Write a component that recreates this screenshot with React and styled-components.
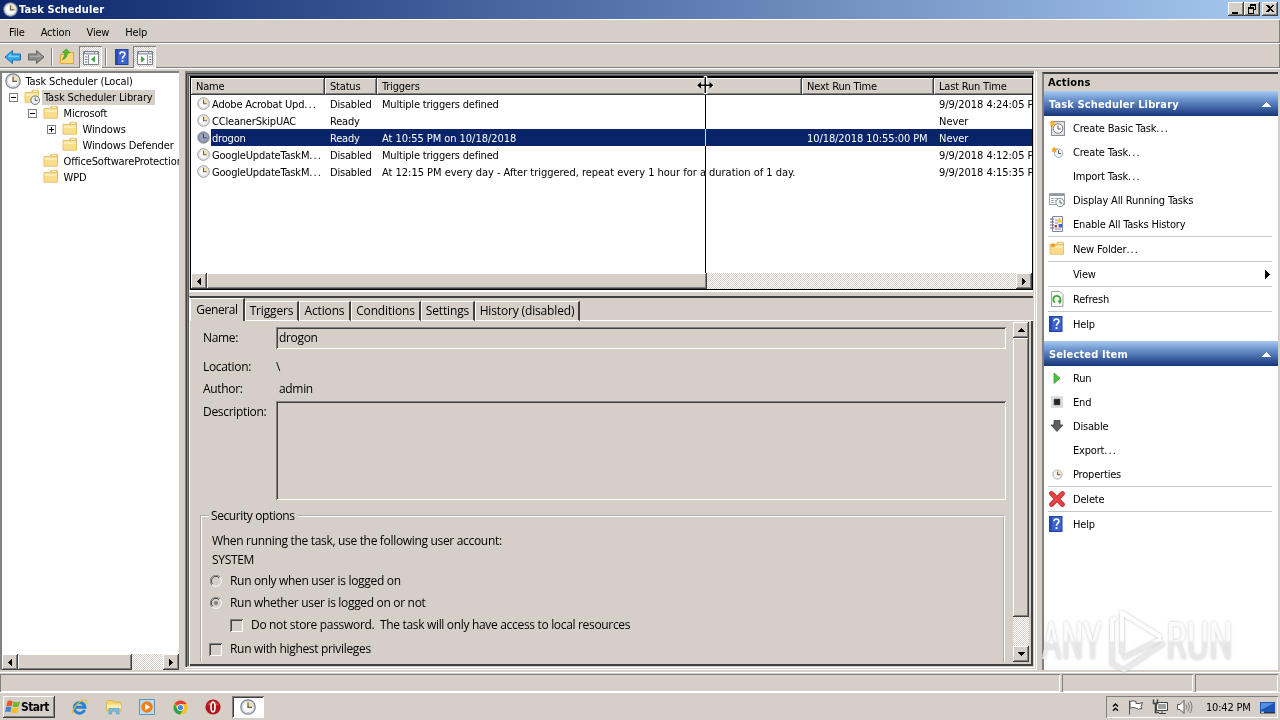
import React from 'react';
import styled, { createGlobalStyle, css } from 'styled-components';

const colors = {
    face: '#d5cfc8',
    shadow: '#808080',
    dark: '#404040',
    navy: '#0a246a',
    sky: '#a6caf0',
};

const GlobalStyle = createGlobalStyle`
    * {
        box-sizing: border-box;
    }

    body {
        margin: 0;
        overflow: hidden;
        background: ${colors.face};
    }

    svg {
        display: block;
        flex: none;
    }
`;

const raised = css`
    background: ${colors.face};
    box-shadow: inset -1px -1px ${colors.dark}, inset 1px 1px #fff, inset -2px -2px ${colors.shadow};
`;

const sunken = css`
    box-shadow: inset 1px 1px ${colors.shadow}, inset -1px -1px #fff, inset 2px 2px ${colors.dark};
`;

const dither = css`
    background: repeating-conic-gradient(#fff 0 25%, ${colors.face} 0 50%) 0 0 / 2px 2px;
`;

const Desktop = styled.div`
    width: 1280px;
    height: 720px;
    display: flex;
    flex-direction: column;
    overflow: hidden;
    position: relative;
    color: #000;
    background: ${colors.face};
    font-family: 'DejaVu Sans Condensed', 'DejaVu Sans', sans-serif;
    font-stretch: condensed;
    font-size: 11px;
    letter-spacing: -0.19px;
    white-space: nowrap;
`;

const TitleBar = styled.div`
    height: 19px;
    flex: none;
    display: flex;
    align-items: center;
    padding: 0 2px 1px 3px;
    background: linear-gradient(90deg, ${colors.navy}, ${colors.sky});
`;

const TitleText = styled.span`
    flex: 1;
    margin-left: 1px;
    color: #fff;
    font-weight: bold;
    letter-spacing: 0.1px;
`;

const CaptionButton = styled.div`
    width: 16px;
    height: 14px;
    margin-left: ${(p) => (p.$gap ? 2 : 0)}px;
    ${raised}
`;

const MenuBar = styled.div`
    height: 25px;
    flex: none;
    display: flex;
    align-items: center;
    gap: 16px;
    padding: 2px 0 0 9px;
    border-top: 1px solid #fff;
    border-bottom: 1px solid #fff;
    box-shadow: inset 0 -1px ${colors.shadow}, inset -1px 0 ${colors.shadow};
`;

const ToolBar = styled.div`
    height: 25px;
    flex: none;
    display: flex;
    align-items: center;
    padding: 1px 0 0 4px;
    border-bottom: 1px solid #fff;
    box-shadow: inset 0 -1px ${colors.shadow}, inset -1px 0 ${colors.shadow};
`;

const ToolButton = styled.div`
    width: ${(p) => p.$w || 23}px;
    height: 22px;
    display: flex;
    align-items: center;
    justify-content: center;
    ${(p) =>
        p.$pressed &&
        css`
            padding-top: 2px;
            ${dither}
            box-shadow: inset 1px 1px ${colors.shadow}, inset -1px -1px #fff;
        `}
`;

const ToolDivider = styled.div`
    width: 2px;
    height: 18px;
    margin: 0 ${(p) => p.$m || 3}px;
    background: linear-gradient(90deg, ${colors.shadow} 50%, #fff 50%);
`;

const Workspace = styled.div`
    height: 603px;
    flex: none;
    display: flex;
    padding: 2px 1px 0 0;
`;

const TreePane = styled.div`
    width: 179px;
    height: 599px;
    flex: none;
    display: flex;
    flex-direction: column;
    background: #fff;
    border: solid ${colors.shadow};
    border-width: 2px 0 0 2px;
    overflow: hidden;
`;

const TreeList = styled.div`
    flex: 1;
    overflow: hidden;
    padding-left: 3px;
    letter-spacing: -0.14px;
`;

const TreeRow = styled.div`
    height: 16px;
    display: flex;
    align-items: center;
    padding-left: ${(p) => p.$indent}px;
`;

const Expander = styled.div`
    width: 9px;
    height: 9px;
    flex: none;
    border: 1px solid ${colors.shadow};
    margin-right: 6px;
    background: linear-gradient(#000, #000) center / 5px 1px no-repeat,
        ${(p) => (p.$plus ? 'linear-gradient(#000, #000) center / 1px 5px no-repeat,' : '')} #fff;
`;

const TreeLabel = styled.span`
    height: 15px;
    line-height: 15px;
    padding: 0 2px;
    margin-left: ${(p) => (p.$selected ? 2 : 2.5)}px;
    background: ${(p) => (p.$selected ? colors.face : 'transparent')};
`;

const HScroll = styled.div`
    height: 16px;
    flex: none;
    display: flex;
    ${dither}
`;

const VScroll = styled.div`
    width: 16px;
    height: 340px;
    margin: 1px 0 0 7px;
    flex: none;
    display: flex;
    flex-direction: column;
    ${dither}
`;

const ScrollButton = styled.div`
    width: 16px;
    height: 16px;
    flex: none;
    display: flex;
    align-items: center;
    justify-content: center;
    ${raised}
`;

const Thumb = styled.div`
    width: ${(p) => p.$w || 16}px;
    height: ${(p) => p.$h || 16}px;
    flex: none;
    ${raised}
`;

const Spacer = styled.div`
    flex: 1;
`;

// Stacked 1px rings make the ridged frame round the middle pane
const CenterPane = styled.div`
    width: 852px;
    height: 599px;
    margin: 0 0 0 6px;
    padding: 5px 4px 5px 4px;
    flex: none;
    display: flex;
    flex-direction: column;
    box-shadow: inset -1px -1px #fff, inset -2px -2px ${colors.face}, inset -3px -3px #fff,
        inset 1px 2px ${colors.shadow}, inset 2px 3px ${colors.dark}, inset -4px -4px ${colors.face},
        inset 3px 4px ${colors.shadow}, inset 4px 5px #5a5a5a;
    background: ${colors.face};
`;

const ListView = styled.div`
    width: 843px;
    height: 214px;
    flex: none;
    display: flex;
    flex-direction: column;
    margin: 0 0 0 1px;
    border: 1px solid #000;
    border-top-width: 2px;
    background: #fff;
    overflow: hidden;
`;

const HeaderRow = styled.div`
    height: 17px;
    flex: none;
    display: flex;
`;

const HeaderCell = styled.div`
    width: ${(p) => p.$w}px;
    flex: none;
    padding-left: 5px;
    line-height: 18px;
    ${raised}
`;

const Rows = styled.div`
    flex: 1;
`;

const Row = styled.div`
    height: 17px;
    display: flex;
    align-items: center;
    padding-left: 6px;
`;

const Cells = styled.div`
    height: 17px;
    display: flex;
    margin-left: 1px;
    line-height: 19px;
    color: ${(p) => (p.$selected ? '#fff' : '#000')};
    background: ${(p) => (p.$selected ? colors.navy : 'transparent')};
`;

const Cell = styled.div`
    width: ${(p) => p.$w}px;
    flex: none;
    padding-left: ${(p) => p.$pad || 6}px;
    letter-spacing: ${(p) => p.$ls || 'inherit'};
`;

const Gutter = styled.div`
    height: 6px;
    flex: none;
    border-top: 2px solid #fff;
`;

const DetailPane = styled.div`
    width: 844px;
    height: 370px;
    flex: none;
    display: flex;
    flex-direction: column;
    border-top: 2px solid ${colors.dark};
    border-left: 1px solid #fff;
    font-family: 'Open Sans', 'Noto Sans', sans-serif;
    font-stretch: normal;
    font-size: 12px;
    letter-spacing: -0.32px;
`;

const Tabs = styled.div`
    height: 23px;
    flex: none;
    display: flex;
    align-items: flex-end;
    box-shadow: inset 0 -1px #fff;
`;

const Tab = styled.div`
    width: ${(p) => p.$w}px;
    height: ${(p) => (p.$active ? 23 : 20)}px;
    line-height: ${(p) => (p.$active ? 21 : 18)}px;
    text-align: center;
    background: ${colors.face};
    border-top: 1px solid #fff;
    border-right: 2px solid ${colors.dark};
    border-bottom: ${(p) => (p.$active ? 0 : 1)}px solid #fff;
    border-left: 1px solid #fff;
    letter-spacing: ${(p) => (p.$active ? -0.4 : -0.15)}px;
`;

const TabPage = styled.div`
    height: 345px;
    display: flex;
    overflow: hidden;
    border-bottom: 2px solid ${colors.dark};
    border-right: 2px solid ${colors.dark};
`;

const Form = styled.div`
    width: 816px;
    height: 341px;
    flex: none;
    padding-top: 6px;
    overflow: hidden;
`;

const Field = styled.div`
    height: ${(p) => p.$h}px;
    line-height: ${(p) => Math.min(p.$h, 22)}px;
    margin-top: ${(p) => p.$mt || 0}px;
    display: flex;
`;

const FieldLabel = styled.div`
    width: 86px;
    flex: none;
    padding-left: 13px;
`;

const FieldBox = styled.div`
    width: 730px;
    padding-left: 3px;
    ${sunken}
`;

const FieldValue = styled.div`
    padding-left: ${(p) => p.$pad}px;
`;

const Security = styled.fieldset`
    width: 805px;
    height: 170px;
    margin: 8px 0 0 10px;
    padding: 0 0 0 1px;
    border: 2px groove #fff;

    legend {
        height: 16px;
        line-height: 16px;
        margin-left: 6px;
        padding: 0 3px 0 2px;
        letter-spacing: -0.4px;
    }
`;

const Line = styled.div`
    height: 18px;
    line-height: 18px;
    margin-top: ${(p) => p.$mt}px;
    padding-left: ${(p) => p.$pad}px;
    display: flex;
    align-items: center;
    gap: 8px;
    white-space: pre;
`;

const CheckBox = styled.div`
    width: 13px;
    height: 13px;
    ${sunken}
`;

const ActionsPane = styled.div`
    width: 236px;
    height: 598px;
    margin: 1px 0 0 5px;
    flex: none;
    display: flex;
    flex-direction: column;
    background: #fff;
    border-top: 2px solid ${colors.dark};
    border-left: 2px solid ${colors.shadow};
`;

const ActionsTitle = styled.div`
    height: 17px;
    flex: none;
    line-height: 17px;
    padding-left: 4px;
    font-weight: bold;
    letter-spacing: 0.15px;
    background: ${colors.face};
`;

const SectionHeader = styled.div`
    height: 25px;
    flex: none;
    display: flex;
    align-items: center;
    justify-content: space-between;
    padding: 1px 7px 0 5px;
    color: #fff;
    font-weight: bold;
    letter-spacing: 0.13px;
    background: linear-gradient(${colors.sky}, #6a93cc 35%, #16357a);
`;

const ActionItem = styled.div`
    height: 24px;
    flex: none;
    display: flex;
    align-items: center;
    padding: 0 8px 0 5px;
`;

const ActionIcon = styled.div`
    width: 17px;
    height: 16px;
    margin-right: 7px;
`;

const Ellipsis = styled.span`
    letter-spacing: 1.1px;
`;

const Separator = styled.div`
    height: 1px;
    flex: none;
    margin: 0 6px 0 4px;
    background: #c8c8c8;
`;

const SectionGap = styled.div`
    height: 5px;
    flex: none;
`;

const StatusBar = styled.div`
    height: 20px;
    flex: none;
    display: flex;
    gap: 2px;
    padding: 1px 2px 0 0;
    border-top: 1px solid #fff;
`;

const StatusPanel = styled.div`
    width: ${(p) => p.$w}px;
    box-shadow: inset 1px 1px ${colors.shadow}, inset -1px -1px #fff;
`;

const TaskBar = styled.div`
    height: 28px;
    flex: none;
    display: flex;
    align-items: center;
    padding: 1px 2px 0 3px;
    border-top: 1px solid #fff;
`;

const StartButton = styled.div`
    width: 52px;
    height: 22px;
    display: flex;
    align-items: center;
    padding-left: 2px;
    font-weight: bold;
    font-size: 12px;
    letter-spacing: -0.6px;
    ${raised}
`;

const QuickLaunch = styled.div`
    display: flex;
    align-items: center;
    gap: 17.6px;
    padding: 0 10.6px 0 16px;
`;

const TaskButton = styled.div`
    width: 32px;
    height: 22px;
    display: flex;
    align-items: center;
    justify-content: center;
    background: #fff;
    ${sunken}
`;

const Tray = styled.div`
    width: 172px;
    height: 22px;
    margin-left: auto;
    display: flex;
    align-items: center;
    padding-left: 6px;
    box-shadow: inset 1px 1px ${colors.shadow}, inset -1px -1px #fff;
`;

const TrayIcons = styled.div`
    display: flex;
    align-items: center;
    gap: 8px;
    width: 94px;
`;

const Clock = styled.span`
    width: 54px;
`;

// Column resize guide that lies over the task list
const DragLine = styled.div`
    position: absolute;
    left: 705px;
    top: 95px;
    width: 1px;
    height: 178px;
    background: #fff;
    mix-blend-mode: difference;
`;

const ResizeCursor = styled.svg`
    position: absolute;
    left: 696px;
    top: 76px;
`;

const Watermark = styled.svg`
    position: absolute;
    left: 1036px;
    top: 604px;
`;

const Glyph = ({ d, w = 16, h = 16, fill = '#000' }) => (
    <svg width={w} height={h} viewBox={`0 0 ${w} ${h}`} shapeRendering="crispEdges">
        <path d={d} fill={fill} />
    </svg>
);

const LeftArrow = () => <Glyph w={4} h={7} d="M4 0v7L0 3.5z" />;
const RightArrow = () => <Glyph w={4} h={7} d="M0 0v7L4 3.5z" />;
const UpArrow = () => <Glyph w={7} h={4} d="M0 4h7L3.5 0z" />;
const DownArrow = () => <Glyph w={7} h={4} d="M0 0h7L3.5 4z" />;

const ClockIcon = ({ size = 16, dim, pale }) => (
    <svg width={size} height={size} viewBox="0 0 16 16">
        <circle cx="8" cy="8" r="7.2" fill={dim ? '#8590ae' : '#e4e7ec'} stroke={pale ? '#a3a099' : '#77808d'} strokeWidth="1.2" />
        <circle cx="8" cy="8" r="5.6" fill={dim ? '#98a1bb' : '#fbfbf8'} stroke={dim ? '#747f9f' : '#c3c8d0'} strokeWidth=".7" />
        <path d="M8 8V2.5A5.5 5.5 0 0 1 13.4 8z" fill={dim ? '#a3a9b8' : '#f6dfae'} />
        <path d="M8 3.4V8.4H12" fill="none" stroke={dim ? '#39466e' : '#67604f'} strokeWidth="1.3" />
    </svg>
);

const FolderIcon = ({ clock, spark }) => (
    <svg width="16" height="16" viewBox="0 0 16 16">
        <path d="M1 4V13.2H14.5V1.8L13.8 1.2H8.4L7.4 3.4H1z" fill="#eec25c" stroke="#e0b04c" strokeWidth=".7" />
        <path d="M1.4 4.2H14.1V12.8H1.4z" fill="#fadd8c" />
        <path d="M1.8 4.6H13.6V7H1.8z" fill="#fdecb6" />
        <path d="M9.5 1.8H13.2V3.1H9z" fill="#fff" />
        {clock && (
            <g>
                <circle cx="11.2" cy="11.2" r="4.3" fill="#eef1f5" stroke="#69717c" />
                <path d="M11.2 8.4v3h2.4" fill="none" stroke="#555" />
            </g>
        )}
        {spark && <path d="M4 1.5l.8 1.800 1.900-.6-1 1.700 1 1.700-1.900-.6L4 7.300l-.8-1.800-1.900.6 1-1.700-1-1.700 1.900.6z" fill="#f0980f" />}
    </svg>
);

const HelpIcon = () => (
    <svg width="14" height="16" viewBox="0 0 14 16">
        <rect x=".5" y=".5" width="12.500" height="15" fill="#3c62cf" stroke="#2444a0" />
        <path d="M1 1h2v14H1z" fill="#2a4bb2" />
        <path d="M5 5.200C5 2.400 9.900 2.200 9.900 5.200 9.900 7.200 7.500 7.300 7.500 9.800" fill="none" stroke="#fff" strokeWidth="1.7" />
        <path d="M6.600 11.200h1.900v1.900H6.600z" fill="#fff" />
    </svg>
);

const ArrowIcon = ({ right }) => (
    <svg width="18" height="16" viewBox="0 0 18 16">
        <path
            d={right ? 'M17 8L9.500 1.500V5H1.500V11H9.500V14.500z' : 'M1 8L8.500 1.500V5H16.500V11H8.500V14.500z'}
            fill={right ? '#8d8d8d' : '#35a9e8'}
            stroke={right ? '#646464' : '#1a6fb4'}
        />
        <path d={right ? 'M3 6.800H11V4.500L14.500 8H3z' : 'M15 6.800H7V4.500L3.500 8H15z'} fill={right ? '#a9a9a9' : '#7fd2f7'} />
    </svg>
);

const UpFolderIcon = () => (
    <svg width="16" height="17" viewBox="0 0 16 17">
        <path d="M1.500 6.500V15.500H14.500V4.500H8L7 6.500z" fill="#f8d77f" stroke="#dba63d" />
        <path d="M3.500 11.500C6.500 11 8 8.500 8.500 5H10.800L7.500 1 3.500 4.300 5.800 4.700C5.800 7.500 5 9.500 3.500 11.500z" fill="#57bd2c" stroke="#38901a" strokeWidth=".7" />
    </svg>
);

const PaneIcon = ({ right }) => (
    <svg width="16" height="14" viewBox="0 0 16 14">
        <path d="M.5.5h15v13H.5z" fill="#fff" stroke="#76808c" />
        <path d="M1 1h14v2.500H1z" fill="#8b97a5" />
        <path d="M2 1.700h9M12 1.700h2.500" stroke="#fff" />
        <path d={right ? 'M10.500 4v9' : 'M5.500 4v9'} stroke="#8b97a5" />
        <path d={right ? 'M12 6h2.500M12 8.500h2.500M12 11h2.500' : 'M2 6h2.500M2 8.500h2.500M2 11h2.500'} stroke="#778" />
        <path d={right ? 'M4 5v6.500L8 8.200z' : 'M12 5v6.500L8 8.200z'} fill="#3fa535" />
    </svg>
);

const BasicTaskIcon = () => (
    <svg width="16" height="16" viewBox="0 0 16 16">
        <rect x="2.500" y="1.500" width="13" height="14" fill="#e0e2e5" stroke="#8a8f97" />
        <circle cx="9" cy="8.500" r="4.800" fill="#fbfbf8" stroke="#78808a" />
        <path d="M9 5.500V9h2.600" fill="none" stroke="#555" />
        <path d="M3.500 0l1 2.300 2.300-.6-1.200 2 1.200 2-2.300-.6-1 2.300-1-2.300L.3 5.700l1.200-2-1.200-2 2.200.6z" fill="#f2b544" />
    </svg>
);

const NewTaskIcon = () => (
    <svg width="16" height="16" viewBox="0 0 16 16">
        <circle cx="9.500" cy="9.200" r="4.200" fill="#eef5fb" stroke="#8ab0cb" />
        <path d="M9.500 6.300v3.200h2.600" fill="none" stroke="#555" />
        <path d="M5 2.500l1.100 2 2.200-.5L7 6l.8 2.400-2.400-.8-2.200 1 .2-2.500L1.800 4.700l2.300-.3z" fill="#f3a51c" />
    </svg>
);

const RunningIcon = () => (
    <svg width="16" height="16" viewBox="0 0 16 16">
        <path d="M.5 1.500h15v11H.5z" fill="#fff" stroke="#9aa2aa" />
        <path d="M1 2h14v2H1z" fill="#8e9aa6" />
        <path d="M2 6.500h3M6 6.500h5M2 8.500h3M6 8.500h2M2 10.500h3" stroke="#a5a5a5" />
        <circle cx="11" cy="10.500" r="4.200" fill="#f3f6f4" stroke="#858d90" />
        <path d="M11 8v3h2.200" fill="none" stroke="#4f7f5a" />
    </svg>
);

const HistoryIcon = () => (
    <svg width="16" height="16" viewBox="0 0 16 16">
        <path d="M3.500.500h10v15h-10z" fill="#f4f5fa" stroke="#7d86a4" />
        <path d="M1 3h4M1 6h4M1 9h4M1 12h4" stroke="#5f6a86" />
        <path d="M6 4h3M6 7h3M6 13h6" stroke="#8a92ad" />
        <path d="M10.500 1.500l2.800 5H7.900z" fill="#f7cb20" />
        <path d="M9.500 8h3.500v3.500H9.500z" fill="#4263c5" />
        <path d="M5.500 9H8v2.500H5.500z" fill="#d23b2e" />
    </svg>
);

const RefreshIcon = () => (
    <svg width="16" height="16" viewBox="0 0 16 16">
        <path d="M2.500.500H11L14 3.500V15.500H2.500z" fill="#f7faf7" stroke="#98a598" />
        <path d="M6 11.500A3.600 3.600 0 1 1 10.600 10.800" fill="none" stroke="#38a836" strokeWidth="1.800" />
        <path d="M8.500 9.500h4.300L10.900 13.300z" fill="#38a836" />
    </svg>
);

const RunIcon = () => (
    <svg width="16" height="16" viewBox="0 0 16 16">
        <path d="M5 3v10.500L11 8.200z" fill="#4cc436" stroke="#35a225" strokeWidth=".8" />
    </svg>
);

const EndIcon = () => (
    <svg width="16" height="16" viewBox="0 0 16 16">
        <path d="M2 2h12v12H2z" fill="#dedede" />
        <path d="M5 5h6v6H5z" fill="#222" stroke="#666" strokeWidth=".6" />
    </svg>
);

const DisableIcon = () => (
    <svg width="16" height="16" viewBox="0 0 16 16">
        <path d="M5 2.500h6V7h3L8 13.500 2 7h3z" fill="#606060" stroke="#3c3c3c" strokeWidth=".8" />
    </svg>
);

const DeleteIcon = () => (
    <svg width="16" height="16" viewBox="0 0 16 16">
        <path d="M2.500 2.500L13.500 13.500M13.500 2.500L2.500 13.500" stroke="#c0262a" strokeWidth="4.600" strokeLinecap="round" />
        <path d="M2.500 2.500L13.500 13.500M13.500 2.500L2.500 13.500" stroke="#ea4345" strokeWidth="3" strokeLinecap="round" />
    </svg>
);

const PropertiesIcon = () => (
    <svg width="16" height="16" viewBox="0 0 16 16">
        <circle cx="8.500" cy="8.500" r="4.600" fill="#f5f4ef" stroke="#aab0b5" />
        <path d="M8.500 8.500V4.200A4.300 4.300 0 0 1 12.800 8.500z" fill="#f6dfae" />
        <path d="M8.500 5.500V8.800H11.500" fill="none" stroke="#5c574c" />
    </svg>
);

const WindowsLogo = () => (
    <svg width="16" height="16" viewBox="0 0 16 16">
        <path d="M2.500 2.200Q5 .8 7.700 2.200L6.600 7.200Q4 6 1.300 7.400z" fill="#e8542a" />
        <path d="M8.600 2.500Q11.500 4 15 2.500L13.700 7.500Q10.500 8.900 7.500 7.500z" fill="#74b82c" />
        <path d="M1.100 8.300Q3.800 7 6.400 8.200L5.300 13.200Q3 12 .1 13.300z" fill="#3d84d8" />
        <path d="M7.300 8.500Q10.300 9.900 13.500 8.500L12.200 13.700Q9.300 15 6.200 13.600z" fill="#f8bf22" />
    </svg>
);

const IeIcon = () => (
    <svg width="17" height="16" viewBox="0 0 17 16">
        <path d="M13.600 11A5.400 5.400 0 1 1 14 8.300H5" fill="none" stroke="#2582d6" strokeWidth="2.900" />
        <path d="M2.200 14.500C-1 12 9-.5 15 1.300c1.300.5.8 2.200.2 3.200" fill="none" stroke="#e8b930" strokeWidth="1.200" />
    </svg>
);

const ExplorerIcon = () => (
    <svg width="16" height="16" viewBox="0 0 16 16">
        <path d="M.5 3.500l1-2h5l1 1.500h7.500v9H.5z" fill="#f5d56e" stroke="#d9ad47" strokeWidth=".8" />
        <path d="M1 5.500h14v4H1z" fill="#fdeeb5" />
        <path d="M3 15V9.500h10V15h-2.600v-3H5.600v3z" fill="#79c3ea" stroke="#4594c4" strokeWidth=".6" />
    </svg>
);

const MediaIcon = () => (
    <svg width="16" height="16" viewBox="0 0 16 16">
        <path d="M.5.500h15v15H.5z" fill="#b9ddf5" stroke="#5b93c5" />
        <circle cx="8" cy="8" r="5.800" fill="#f07f17" />
        <path d="M6.200 4.800v6.400L11.200 8z" fill="#fff" />
    </svg>
);

const ChromeIcon = () => (
    <svg width="15" height="15" viewBox="0 0 16 16">
        <circle cx="8" cy="8" r="7.500" fill="#fbc116" />
        <path d="M8 8L1.500 4.300A7.500 7.500 0 0 1 14.500 4.300H8z" fill="#de4033" />
        <path d="M1.500 4.300A7.500 7.500 0 0 0 7.500 15.500L11 10 8 8 4.800 9.800z" fill="#2da14c" />
        <circle cx="8" cy="8" r="3.600" fill="#fff" />
        <circle cx="8" cy="8" r="2.800" fill="#4385ea" />
    </svg>
);

const OperaIcon = () => (
    <svg width="16" height="16" viewBox="0 0 16 16">
        <circle cx="8" cy="8" r="7.600" fill="#b5141b" />
        <path d="M2 5.500A7 5 0 0 1 14 5.500Q8 8 2 5.500z" fill="#d8484c" />
        <ellipse cx="8" cy="8" rx="2" ry="4.800" fill="#a50f15" stroke="#fff" strokeWidth="1.700" />
    </svg>
);

const Radio = ({ checked }) => (
    <svg width="12" height="12" viewBox="0 0 12 12">
        <circle cx="6" cy="6" r="5.400" fill={colors.face} stroke="#fff" />
        <path d="M1.900 10A5.400 5.400 0 0 1 10 1.900" fill="none" stroke="#808080" />
        <path d="M2.700 9.200A4.400 4.400 0 0 1 9.200 2.700" fill="none" stroke="#404040" />
        {checked && <circle cx="6" cy="6" r="2" fill="#808080" />}
    </svg>
);

const tree = [
    { label: 'Task Scheduler (Local)', indent: 0, icon: <ClockIcon /> },
    { label: 'Task Scheduler Library', indent: 4, box: 'minus', icon: <FolderIcon clock />, selected: true },
    { label: 'Microsoft', indent: 23, box: 'minus', icon: <FolderIcon /> },
    { label: 'Windows', indent: 42, box: 'plus', icon: <FolderIcon /> },
    { label: 'Windows Defender', indent: 57, icon: <FolderIcon /> },
    { label: 'OfficeSoftwareProtectionPlatform', indent: 38, icon: <FolderIcon /> },
    { label: 'WPD', indent: 38, icon: <FolderIcon /> },
];

const tasks = [
    { name: 'Adobe Acrobat Upd...', status: 'Disabled', trigger: 'Multiple triggers defined', last: '9/9/2018 4:24:05 PM' },
    { name: 'CCleanerSkipUAC', status: 'Ready', last: 'Never' },
    {
        name: 'drogon',
        status: 'Ready',
        trigger: 'At 10:55 PM on 10/18/2018',
        ls: '-0.05px',
        next: '10/18/2018 10:55:00 PM',
        last: 'Never',
        selected: true,
    },
    { name: 'GoogleUpdateTaskM...', status: 'Disabled', trigger: 'Multiple triggers defined', last: '9/9/2018 4:12:05 PM' },
    {
        name: 'GoogleUpdateTaskM...',
        status: 'Disabled',
        trigger: 'At 12:15 PM every day - After triggered, repeat every 1 hour for a duration of 1 day.',
        ls: '-0.02px',
        last: '9/9/2018 4:15:35 PM',
    },
];

const libraryActions = [
    { label: 'Create Basic Task...', icon: <BasicTaskIcon /> },
    { label: 'Create Task...', icon: <NewTaskIcon /> },
    { label: 'Import Task...' },
    { label: 'Display All Running Tasks', icon: <RunningIcon /> },
    { label: 'Enable All Tasks History', icon: <HistoryIcon />, line: true },
    { label: 'New Folder...', icon: <FolderIcon spark />, line: true },
    { label: 'View', submenu: true, line: true },
    { label: 'Refresh', icon: <RefreshIcon />, line: true },
    { label: 'Help', icon: <HelpIcon /> },
];

const itemActions = [
    { label: 'Run', icon: <RunIcon /> },
    { label: 'End', icon: <EndIcon /> },
    { label: 'Disable', icon: <DisableIcon /> },
    { label: 'Export...' },
    { label: 'Properties', icon: <PropertiesIcon />, line: true },
    { label: 'Delete', icon: <DeleteIcon />, line: true },
    { label: 'Help', icon: <HelpIcon /> },
];

// Trailing dots are set wider than the rest of the text
const Label = ({ text }) => {
    const dots = text.endsWith('...');
    return (
        <span>
            {dots ? text.slice(0, -3) : text}
            {dots && <Ellipsis>...</Ellipsis>}
        </span>
    );
};

const ActionSection = ({ title, items }) => (
    <>
        <SectionHeader>
            {title}
            <Glyph w={9} h={5} fill="#fff" d="M0 5h9L4.500 0z" />
        </SectionHeader>
        {items.map((item) => (
            <React.Fragment key={item.label}>
                <ActionItem>
                    <ActionIcon>{item.icon}</ActionIcon>
                    <Label text={item.label} />
                    {item.submenu && (
                        <>
                            <Spacer />
                            <Glyph w={5} h={9} d="M0 0v9L5 4.500z" />
                        </>
                    )}
                </ActionItem>
                {item.line && <Separator />}
            </React.Fragment>
        ))}
    </>
);

export default function App() {
    return (
        <Desktop>
            <GlobalStyle />
            <TitleBar>
                <ClockIcon size={15} />
                <TitleText>Task Scheduler</TitleText>
                <CaptionButton>
                    <Glyph d="M4 10h6v2H4z" h={14} />
                </CaptionButton>
                <CaptionButton>
                    <Glyph h={14} d="M6 2h6v6h-2V7h1V4H7v1H6zM4 5h6v7H4zM5 7v4h4V7z" />
                </CaptionButton>
                <CaptionButton $gap>
                    <Glyph h={14} d="M4 3h2l2 2 2-2h2L9 6.500 12 10h-2L8 8l-2 2H4l3-3.500z" />
                </CaptionButton>
            </TitleBar>

            <MenuBar>
                <span>File</span>
                <span>Action</span>
                <span>View</span>
                <span>Help</span>
            </MenuBar>

            <ToolBar>
                <ToolButton $w={18}>
                    <ArrowIcon />
                </ToolButton>
                <ToolButton $w={27}>
                    <ArrowIcon right />
                </ToolButton>
                <ToolDivider $m={2} />
                <ToolButton $w={24}>
                    <UpFolderIcon />
                </ToolButton>
                <ToolButton $pressed>
                    <PaneIcon />
                </ToolButton>
                <ToolDivider />
                <ToolButton $w={23}>
                    <HelpIcon />
                </ToolButton>
                <ToolButton $pressed>
                    <PaneIcon right />
                </ToolButton>
            </ToolBar>

            <Workspace>
                <TreePane>
                    <TreeList>
                        {tree.map((node) => (
                            <TreeRow key={node.label} $indent={node.indent}>
                                {node.box && <Expander $plus={node.box === 'plus'} />}
                                {node.icon}
                                <TreeLabel $selected={node.selected}>{node.label}</TreeLabel>
                            </TreeRow>
                        ))}
                    </TreeList>
                    <HScroll>
                        <ScrollButton>
                            <LeftArrow />
                        </ScrollButton>
                        <Thumb $w={114} />
                        <Spacer />
                        <ScrollButton>
                            <RightArrow />
                        </ScrollButton>
                    </HScroll>
                </TreePane>

                <CenterPane>
                    <ListView>
                        <HeaderRow>
                            <HeaderCell $w={134}>Name</HeaderCell>
                            <HeaderCell $w={52}>Status</HeaderCell>
                            <HeaderCell $w={425}>Triggers</HeaderCell>
                            <HeaderCell $w={132}>Next Run Time</HeaderCell>
                            <HeaderCell $w={120}>Last Run Time</HeaderCell>
                        </HeaderRow>
                        <Rows>
                            {tasks.map((task, i) => (
                                <Row key={i}>
                                    <ClockIcon size={13} pale dim={task.selected} />
                                    <Cells $selected={task.selected}>
                                        <Cell $w={113} $pad={1}>
                                            <Label text={task.name} />
                                        </Cell>
                                        <Cell $w={52}>{task.status}</Cell>
                                        <Cell $w={425} $ls={task.ls}>
                                            {task.trigger}
                                        </Cell>
                                        <Cell $w={132} $ls="-0.08px">
                                            {task.next}
                                        </Cell>
                                        <Cell $w={120} $ls="-0.02px">
                                            {task.last}
                                        </Cell>
                                    </Cells>
                                </Row>
                            ))}
                        </Rows>
                        <HScroll>
                            <ScrollButton>
                                <LeftArrow />
                            </ScrollButton>
                            <Thumb $w={500} />
                            <Spacer />
                            <ScrollButton>
                                <RightArrow />
                            </ScrollButton>
                        </HScroll>
                    </ListView>

                    <Gutter />

                    <DetailPane>
                        <Tabs>
                            <Tab $w={55} $active>
                                General
                            </Tab>
                            <Tab $w={54}>Triggers</Tab>
                            <Tab $w={52}>Actions</Tab>
                            <Tab $w={70}>Conditions</Tab>
                            <Tab $w={54}>Settings</Tab>
                            <Tab $w={105}>History (disabled)</Tab>
                        </Tabs>
                        <TabPage>
                            <Form>
                                <Field $h={22}>
                                    <FieldLabel>Name:</FieldLabel>
                                    <FieldBox>drogon</FieldBox>
                                </Field>
                                <Field $h={18} $mt={9}>
                                    <FieldLabel>Location:</FieldLabel>
                                    <FieldValue $pad={0}>\</FieldValue>
                                </Field>
                                <Field $h={18} $mt={4}>
                                    <FieldLabel>Author:</FieldLabel>
                                    <FieldValue $pad={3}>admin</FieldValue>
                                </Field>
                                <Field $h={99} $mt={3}>
                                    <FieldLabel>Description:</FieldLabel>
                                    <FieldBox />
                                </Field>
                                <Security>
                                    <legend>Security options</legend>
                                    <Line $mt={8} $pad={9}>
                                        When running the task, use the following user account:
                                    </Line>
                                    <Line $mt={1} $pad={9}>
                                        SYSTEM
                                    </Line>
                                    <Line $mt={3} $pad={7}>
                                        <Radio />
                                        Run only when user is logged on
                                    </Line>
                                    <Line $mt={4} $pad={7}>
                                        <Radio checked />
                                        Run whether user is logged on or not
                                    </Line>
                                    <Line $mt={4} $pad={27}>
                                        <CheckBox />
                                        {'Do not store password.  The task will only have access to local resources'}
                                    </Line>
                                    <Line $mt={6} $pad={6}>
                                        <CheckBox />
                                        Run with highest privileges
                                    </Line>
                                </Security>
                            </Form>
                            <VScroll>
                                <ScrollButton>
                                    <UpArrow />
                                </ScrollButton>
                                <Thumb $h={279} />
                                <Spacer />
                                <ScrollButton>
                                    <DownArrow />
                                </ScrollButton>
                            </VScroll>
                        </TabPage>
                    </DetailPane>
                </CenterPane>

                <ActionsPane>
                    <ActionsTitle>Actions</ActionsTitle>
                    <ActionSection title="Task Scheduler Library" items={libraryActions} />
                    <SectionGap />
                    <ActionSection title="Selected Item" items={itemActions} />
                </ActionsPane>
            </Workspace>

            <StatusBar>
                <StatusPanel $w={1060} />
                <StatusPanel $w={131} />
                <StatusPanel $w={83} />
            </StatusBar>

            <TaskBar>
                <StartButton>
                    <WindowsLogo />
                    Start
                </StartButton>
                <QuickLaunch>
                    <IeIcon />
                    <ExplorerIcon />
                    <MediaIcon />
                    <ChromeIcon />
                    <OperaIcon />
                </QuickLaunch>
                <TaskButton>
                    <ClockIcon />
                </TaskButton>
                <Tray>
                    <TrayIcons>
                        <svg width="7" height="9" viewBox="0 0 7 9">
                            <path d="M1 3.500L3.500 1 6 3.500M1 7.800L3.500 5.300 6 7.800" fill="none" stroke="#000" strokeWidth="1.400" />
                        </svg>
                        <svg width="17" height="16" viewBox="0 0 17 16">
                            <path d="M2.500 15.500V1.500M3 2.500Q6 1 9 2.500V4.500Q13 5 15.500 3.500L14 7.500 15 9.500Q11 11 8.500 9Q6 8 3 9z" fill="#fff" stroke="#555" />
                        </svg>
                        <svg width="16" height="16" viewBox="0 0 16 16">
                            <path d="M4.500 3.500h11v8h-11z" fill="#a0a0a0" stroke="#444" />
                            <path d="M5.500 4.500h9v6h-9z" fill="none" stroke="#fff" />
                            <path d="M10 12v2M7 14.500h7" stroke="#444" />
                            <path d="M1.500.5v4h4v-4M3.500 5v8.500H7" fill="none" stroke="#444" strokeWidth="1.500" />
                        </svg>
                        <svg width="17" height="16" viewBox="0 0 17 16">
                            <path d="M1.500 5.500h2.500L8 1.500v13L4 10.500H1.500z" fill="#fff" stroke="#555" />
                            <path d="M10 5.500q1.500 2.500 0 5M12 3.500q3 4.500 0 9M14 2q4 6 0 12" fill="none" stroke="#777" />
                        </svg>
                    </TrayIcons>
                    <Clock>10:42 PM</Clock>
                    <svg width="15" height="13" viewBox="0 0 15 13">
                        <path d="M0 1h15v10H0z" fill="#1f56b0" />
                        <path d="M1 2h13L1 9z" fill="#5193e0" />
                        <path d="M0 11h15v1.500H0z" fill="#23344f" />
                        <path d="M1 11.200h3" stroke="#fff" />
                    </svg>
                </Tray>
            </TaskBar>

            <DragLine />
            <ResizeCursor width="18" height="18" viewBox="0 0 18 18">
                <path d="M9.500 0V18M1 9.500H18" fill="none" stroke="#fff" strokeWidth="3.500" />
                <path d="M8.500 1H10v16H8.500zM3 8.500h12V10H3z" />
                <path d="M1 9.300L5 6v6.600zM17.500 9.300L13.500 6v6.600z" />
            </ResizeCursor>
            <Watermark width="204" height="72" viewBox="0 0 204 72">
                <defs>
                    <linearGradient id="ink" x1="0" y1="0" x2="0" y2="72" gradientUnits="userSpaceOnUse">
                        <stop offset=".5" stopColor="#fff" />
                        <stop offset=".54" stopColor="#e9e9e9" />
                    </linearGradient>
                    <filter id="soft" x="-10%" y="-20%" width="120%" height="140%">
                        <feDropShadow dx="0" dy="0" stdDeviation="1.600" floodColor="#888" floodOpacity=".55" />
                    </filter>
                </defs>
                <g filter="url(#soft)" fill="url(#ink)" fillOpacity=".85" fontFamily="Roboto, sans-serif" fontSize="51">
                    <text x="5" y="55" textLength="61" lengthAdjust="spacingAndGlyphs">
                        ANY
                    </text>
                    <text x="130" y="55" textLength="67" lengthAdjust="spacingAndGlyphs">
                        RUN
                    </text>
                    <path
                        d="M86 50V9l39 24M80 14l-4 2v44l12 6 40-27M87 54l38-19"
                        fill="none"
                        stroke="url(#ink)"
                        strokeWidth="4"
                        strokeLinejoin="round"
                    />
                </g>
            </Watermark>
        </Desktop>
    );
}
